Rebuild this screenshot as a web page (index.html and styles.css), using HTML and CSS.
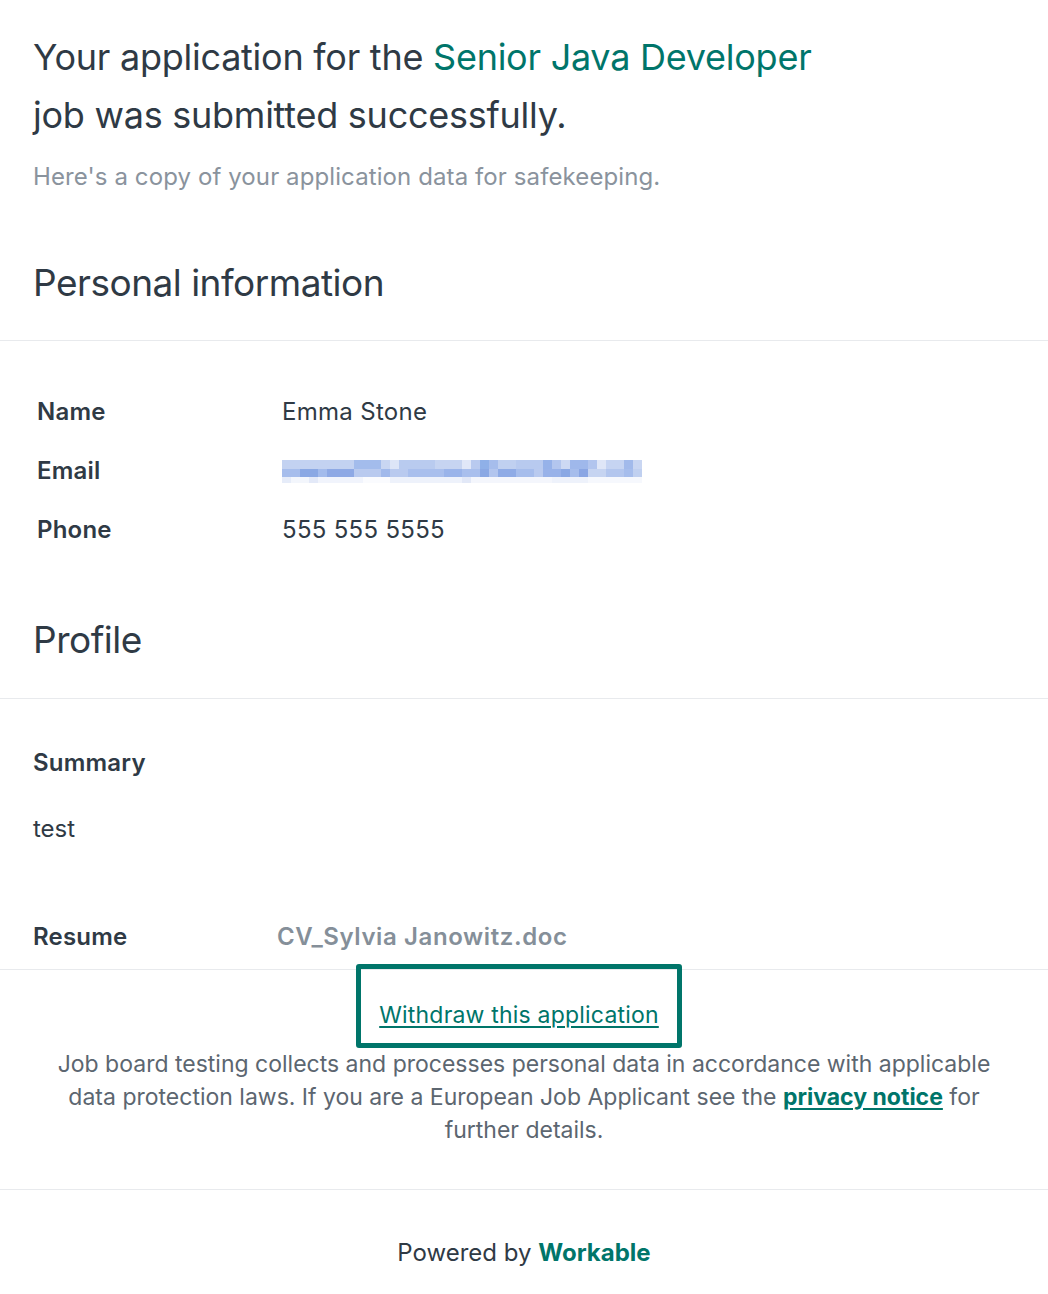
FILE: index.html
```html
<!DOCTYPE html>
<html lang="en">
<head>
<meta charset="utf-8">
<title>Application submitted</title>
<link rel="stylesheet" href="styles.css">
</head>
<body>
<main class="page">
  <header class="intro">
    <h1 class="title">Your application for the <span class="accent">Senior Java Developer</span><br>job was submitted successfully.</h1>
    <p class="subtitle">Here's a copy of your application data for safekeeping.</p>
  </header>

  <section class="section">
    <h2 class="section-title">Personal information</h2>
    <div class="section-body">
      <dl class="fields">
        <div class="field"><dt>Name</dt><dd>Emma Stone</dd></div>
        <div class="field"><dt>Email</dt><dd><span class="blur" aria-label="hidden email"><span class="blur-row r1"></span><span class="blur-row r2"></span><span class="blur-row r3"></span></span></dd></div>
        <div class="field"><dt>Phone</dt><dd>555 555 5555</dd></div>
      </dl>
    </div>
  </section>

  <section class="section">
    <h2 class="section-title">Profile</h2>
    <div class="section-body profile">
      <h3 class="label">Summary</h3>
      <p class="summary">test</p>
      <div class="resume"><span class="label">Resume</span><span class="file">CV_Sylvia Janowitz.doc</span></div>
    </div>
  </section>

  <footer class="footer">
    <div class="withdraw-wrap"><a class="withdraw" href="#">Withdraw this application</a></div>
    <p class="notice">Job board testing collects and processes personal data in accordance with applicable data protection laws. If you are a European Job Applicant see the <a class="privacy" href="#">privacy notice</a> for further details.</p>
    <p class="powered">Powered by <span class="brand">Workable</span></p>
  </footer>
</main>
</body>
</html>
```

FILE: styles.css
```css
* { box-sizing: border-box; }

html, body {
  margin: 0;
  padding: 0;
  background: #ffffff;
}

body {
  font-family: Inter, "Noto Sans", "Liberation Sans", sans-serif;
  color: #2f3a45;
}

.page {
  width: 1048px;
}

.intro {
  padding: 28px 33px 0;
}

.title {
  margin: 0;
  font-size: 36px;
  font-weight: 400;
  line-height: 58px;
  letter-spacing: -0.25px;
  color: #2f3a45;
}

.accent { color: #00756a; }

.subtitle {
  margin: 18px 0 0;
  font-size: 24px;
  line-height: 30px;
  letter-spacing: 0.1px;
  color: #8a939d;
}

.section-title {
  margin: 0;
  padding: 0 33px;
  font-size: 37px;
  font-weight: 400;
  line-height: 46px;
  letter-spacing: -0.5px;
  color: #2f3a45;
}

.section:first-of-type .section-title { margin-top: 68px; padding-bottom: 34px; }
.section + .section .section-title { margin-top: 50px; padding-bottom: 35px; }

.section-body {
  border-top: 1px solid #e8eaed;
}

.fields {
  margin: 0;
  padding: 55px 37px 23px;
  display: flex;
  flex-direction: column;
  gap: 29px;
}

.field {
  display: flex;
  align-items: center;
  height: 30px;
}

.field dt {
  width: 245px;
  font-size: 24px;
  font-weight: 600;
  letter-spacing: 0.2px;
  color: #2f3a45;
}

.field dd {
  margin: 0;
  font-size: 24px;
  letter-spacing: 0.3px;
  color: #2f3a45;
}

.blur {
  display: flex;
  flex-direction: column;
  width: 360px;
  margin-top: 2px;
}

.blur-row { display: block; width: 360px; }
.r1 {
  height: 9px;
  background: linear-gradient(to right,
    #c3d2f1 0 72px, #a3bcec 72px 99px, #c9d6f2 99px 108px, #dde5f7 108px 117px,
    #b9cbef 117px 153px, #c6d4f1 153px 180px, #e0e7f8 180px 189px, #b9caef 189px 198px,
    #8fb0e8 198px 207px, #a6bdec 207px 216px, #c0d0f0 216px 234px, #b8caef 234px 261px,
    #96b2e9 261px 270px, #b3c6ee 270px 279px, #cdd9f3 279px 288px, #9fb8eb 288px 306px,
    #b2c5ee 306px 315px, #dfe6f7 315px 324px, #c6d4f2 324px 342px, #a2baeb 342px 351px,
    #c9d6f2 351px 360px);
}
.r2 {
  height: 8px;
  background: linear-gradient(to right,
    #a6bdec 0 18px, #8aa8e4 18px 36px, #a3bbec 36px 45px, #8ea9e5 45px 72px,
    #b9caef 72px 99px, #a1b9eb 99px 108px, #b9caef 108px 126px, #a9bfed 126px 162px,
    #9ab4ea 162px 180px, #a9bfed 180px 198px, #8aa8e4 198px 207px, #b2c5ee 207px 216px,
    #8fabe6 216px 234px, #a6bdec 234px 252px, #b9caef 252px 261px, #98b2e9 261px 279px,
    #8aa8e4 279px 288px, #a6bdec 288px 297px, #8aa6e4 297px 306px, #c6d4f1 306px 324px,
    #b3c6ee 324px 342px, #a6bdec 342px 351px, #c0d0f0 351px 360px);
}
.r3 {
  height: 6px;
  background: linear-gradient(to right,
    #e6ecf9 0 9px, #f3f6fc 9px 27px, #e3e9f8 27px 36px, #f1f4fc 36px 81px,
    #fafbfe 81px 108px, #eef2fb 108px 180px, #e2e8f7 180px 189px, #f4f6fc 189px 270px,
    #eef2fb 270px 306px, #f6f8fd 306px 360px);
}

.profile {
  padding: 49px 33px 17px;
}

.label {
  margin: 0;
  font-size: 24px;
  font-weight: 600;
  line-height: 30px;
  letter-spacing: 0.2px;
  color: #2f3a45;
}

.summary {
  margin: 36px 0 0;
  font-size: 24px;
  line-height: 30px;
  color: #2f3a45;
}

.resume {
  margin-top: 78px;
  display: flex;
  align-items: center;
}

.resume .label { width: 244px; }

.file {
  font-size: 24px;
  font-weight: 600;
  line-height: 30px;
  letter-spacing: 0.6px;
  color: #858f99;
}

.footer {
  border-top: 1px solid #e8eaed;
  text-align: center;
}

.withdraw-wrap {
  display: flex;
  justify-content: center;
  margin-top: -6px;
  padding-right: 10px;
}

.withdraw {
  display: block;
  width: 326px;
  height: 84px;
  padding-top: 31px;
  border: 5px solid #00756a;
  border-radius: 3px;
  font-size: 23px;
  line-height: 30px;
  letter-spacing: 0.2px;
  color: #00756a;
  text-decoration: underline;
  text-underline-offset: 3px;
  text-decoration-thickness: 1.5px;
}

.notice {
  margin: 0;
  width: 100%;
  padding: 0 49px 42px;
  font-size: 23px;
  line-height: 33px;
  color: #5c6670;
  border-bottom: 1px solid #e8eaed;
}

.privacy {
  font-weight: 700;
  color: #00756a;
  text-decoration: underline;
  text-underline-offset: 3px;
  text-decoration-thickness: 2px;
}

.powered {
  margin: 47px 0 0;
  font-size: 24px;
  line-height: 32px;
  color: #2f3a45;
}

.brand {
  font-weight: 700;
  color: #00756a;
}
```
